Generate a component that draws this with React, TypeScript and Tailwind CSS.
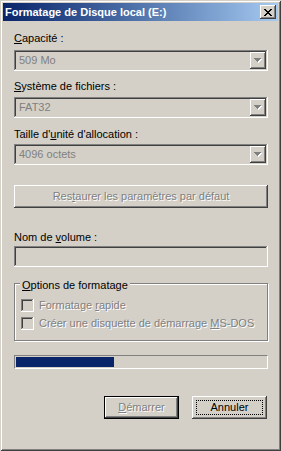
import React from 'react';

// classic 3D borders
const raised = "shadow-[inset_-1px_-1px_#404040,inset_1px_1px_#ffffff,inset_-2px_-2px_#808080,inset_2px_2px_#d4d0c8]";
const sunken = "shadow-[inset_-1px_-1px_#ffffff,inset_1px_1px_#808080,inset_-2px_-2px_#d4d0c8,inset_2px_2px_#404040]";
const disabledText = "text-[#808080] [text-shadow:1px_1px_0_#ffffff]";

function DownArrow() {
  return (
    <svg width="8" height="5" viewBox="0 0 8 5" shapeRendering="crispEdges">
      <g fill="#ffffff">
        <rect x="1" y="1" width="7" height="1" />
        <rect x="2" y="2" width="5" height="1" />
        <rect x="3" y="3" width="3" height="1" />
        <rect x="4" y="4" width="1" height="1" />
      </g>
      <g fill="#808080">
        <rect x="0" y="0" width="7" height="1" />
        <rect x="1" y="1" width="5" height="1" />
        <rect x="2" y="2" width="3" height="1" />
        <rect x="3" y="3" width="1" height="1" />
      </g>
    </svg>
  );
}

function CloseGlyph() {
  return (
    <svg width="8" height="7" viewBox="0 0 8 7" shapeRendering="crispEdges">
      <path
        fill="#000000"
        d="M0 0h2v1h-2zM6 0h2v1h-2zM1 1h2v1h-2zM5 1h2v1h-2zM2 2h4v1h-4zM3 3h2v1h-2zM2 4h4v1h-4zM1 5h2v1h-2zM5 5h2v1h-2zM0 6h2v1h-2zM6 6h2v1h-2z"
      />
    </svg>
  );
}

function Combo({ value }: { value: string }) {
  return (
    <div className={`flex h-[21px] items-center bg-[#d4d0c8] p-[2px] ${sunken}`}>
      <span className="flex-1 pl-[3px] text-[#808080] leading-[13px]">{value}</span>
      <div className={`flex h-[17px] w-[16px] items-center justify-center bg-[#d4d0c8] ${raised}`}>
        <DownArrow />
      </div>
    </div>
  );
}

function CheckRow({ children, className = '' }: { children: React.ReactNode; className?: string }) {
  return (
    <div className={`flex h-[13px] items-center gap-[5px] ${className}`}>
      <div className={`h-[13px] w-[13px] bg-[#d4d0c8] ${sunken}`}></div>
      <span className={`leading-[13px] ${disabledText}`}>{children}</span>
    </div>
  );
}

export default function App() {
  return (
    <div className="h-[451px] w-[281px] bg-[#d4d0c8] font-['Liberation_Sans',Arial,sans-serif] text-[11px] text-black">
      <div className="flex h-full w-full flex-col p-[3px] shadow-[inset_1px_1px_#d4d0c8,inset_-1px_-1px_#404040,inset_2px_2px_#ffffff,inset_-2px_-2px_#808080]">
        {/* Title bar */}
        <div className="flex h-[18px] shrink-0 items-center justify-between bg-gradient-to-r from-[#0a246a] to-[#a6caf0] pl-[2px] pr-[2px]">
          <span className="font-bold leading-[13px] text-white">Formatage de Disque local (E:)</span>
          <div className={`flex h-[14px] w-[16px] items-center justify-center bg-[#d4d0c8] ${raised}`}>
            <CloseGlyph />
          </div>
        </div>

        <div className="flex flex-col pl-[11px] pr-[10px]">
          <label className="mt-[11px] leading-[13px]"><u>C</u>apacité :</label>
          <div className="mt-[5px]"><Combo value="509 Mo" /></div>

          <label className="mt-[9px] leading-[13px]"><u>S</u>ystème de fichiers :</label>
          <div className="mt-[4px]"><Combo value="FAT32" /></div>

          <label className="mt-[10px] leading-[13px]">Taille d'<u>u</u>nité d'allocation :</label>
          <div className="mt-[3px]"><Combo value="4096 octets" /></div>

          <div className={`mt-[20px] flex h-[23px] items-center justify-center bg-[#d4d0c8] ${raised}`}>
            <span className={`leading-[13px] ${disabledText}`}>Res<u>t</u>aurer les paramètres par défaut</span>
          </div>

          <label className="mt-[23px] leading-[13px]">Nom de <u>v</u>olume :</label>
          <div className={`mt-[2px] h-[21px] bg-[#d4d0c8] ${sunken}`}></div>

          {/* Options group */}
          <div className="relative mt-[16px] h-[58px] w-[254px] border border-[#808080] pl-[6px] pt-[15px] shadow-[1px_1px_#ffffff,inset_1px_1px_#ffffff]">
            <span className="absolute left-[5px] top-[-5px] bg-[#d4d0c8] px-[2px] leading-[13px]"><u>O</u>ptions de formatage</span>
            <CheckRow>Formatage <u>r</u>apide</CheckRow>
            <CheckRow className="mt-[5px]">Créer une disquette de démarrage <u>M</u>S-DOS</CheckRow>
          </div>

          {/* Progress */}
          <div className="mt-[14px] h-[14px] border border-b-white border-l-[#808080] border-r-white border-t-[#808080] p-[1px]">
            <div className="h-full w-[98px] bg-[#0a246a]"></div>
          </div>

          <div className="mt-[27px] flex justify-end gap-[13px] pr-[1px]">
            <div className="h-[23px] w-[75px] border border-black">
              <div className={`flex h-full w-full items-center justify-center bg-[#d4d0c8] ${raised}`}>
                <span className={`leading-[13px] ${disabledText}`}><u>D</u>émarrer</span>
              </div>
            </div>
            <div className={`relative flex h-[23px] w-[75px] items-center justify-center bg-[#d4d0c8] ${raised}`}>
              <span className="leading-[13px]">Annuler</span>
              <div className="absolute inset-[4px] border border-dotted border-black"></div>
            </div>
          </div>
        </div>
      </div>
    </div>
  );
}
